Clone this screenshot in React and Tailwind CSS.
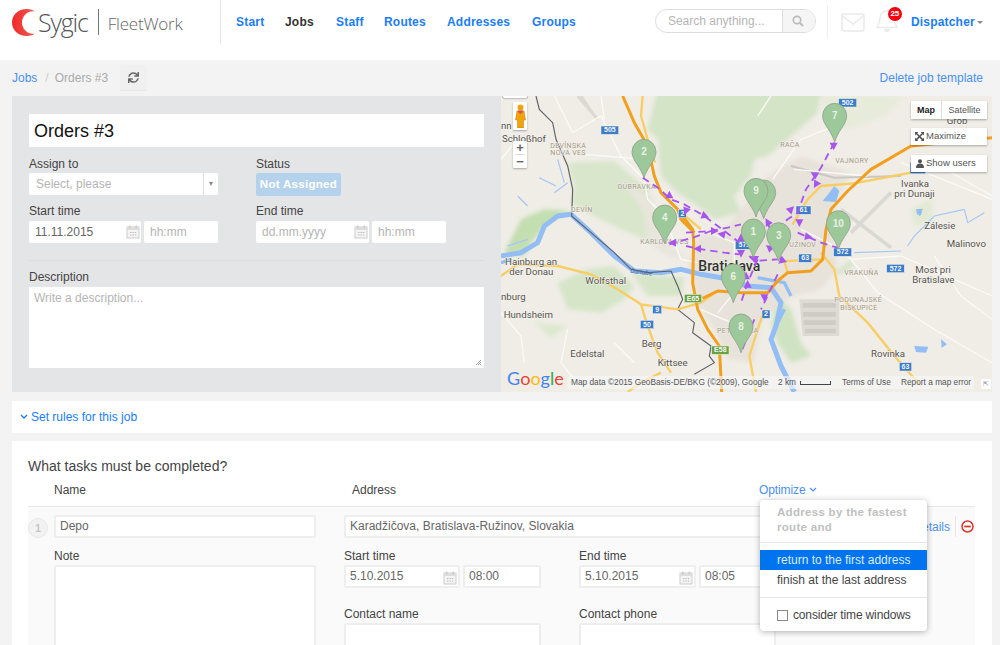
import React from "react";
import { FaSync } from "react-icons/fa";

const F = "[font-family:'Liberation_Sans',Arial,sans-serif]";

function Cal() {
  return (
    <svg width="14" height="14" viewBox="0 0 14 14" className="absolute right-[1px] top-[4px]">
      <rect x="1" y="2" width="12" height="11" fill="#f4f4f4" stroke="#ccc" />
      <rect x="1" y="2" width="12" height="3" fill="#ddd" />
      <rect x="3" y="0.5" width="1.5" height="3" fill="#ccc" />
      <rect x="9.5" y="0.5" width="1.5" height="3" fill="#ccc" />
      <path d="M4 7.5h1.4M6.4 7.5h1.4M8.8 7.5h1.4M4 10h1.4M6.4 10h1.4M8.8 10h1.4" stroke="#bbb" strokeWidth="1.2" />
    </svg>
  );
}

function Field({ className = "", children, muted, date }) {
  return (
    <div className={`relative h-[22px] shrink-0 rounded-[2px] bg-white px-[6px] text-[12px] leading-[22px] ${muted ? "text-[#b4b4b4]" : "text-[#666]"} ${className}`}>
      {children}
      {date && <Cal />}
    </div>
  );
}

function RowField({ className = "", children, date }) {
  return (
    <div className={`relative h-[23px] shrink-0 rounded-[2px] border-2 border-[#eeeeee] bg-white px-[4px] text-[12px] leading-[19px] text-[#666] ${className}`}>
      {children}
      {date && <Cal />}
    </div>
  );
}

function Pin({ x, y, n }) {
  return (
    <g>
      <path d={`M${x - 36} ${y}a36 38 0 1 1 72 0c0 14 -8 26 -16 38c-8 12 -16 26 -20 40c-4 -14 -12 -28 -20 -40c-8 -12 -16 -24 -16 -38z`} fill="#9dc99a" stroke="#8f9f8d" strokeWidth="2.5" />
      <text x={x} y={y + 10} textAnchor="middle" fontSize="30" fontWeight="700" fill="#e9f1e4" fontFamily="Liberation Sans">{n}</text>
    </g>
  );
}

function Shield({ x, y, t, w = 40, c = "#3d7cc9" }) {
  return (
    <g>
      <rect x={x} y={y} width={w} height="25" fill={c} stroke="#f4f4f0" strokeWidth="1.5" />
      <text x={x + w / 2} y={y + 19} textAnchor="middle" fontSize="21" fontWeight="700" fill="#f2f6fb" fontFamily="Liberation Sans">{t}</text>
    </g>
  );
}

function Town({ x, y, t, s = 29 }) {
  return <text x={x} y={y} fontSize={s} fill="#55534e" stroke="#f5f3ee" strokeWidth="3" paintOrder="stroke" fontFamily="Roboto, Liberation Sans">{t}</text>;
}

function Dist({ x, y, t }) {
  return <text x={x} y={y} fontSize="21" letterSpacing="1" fill="#a3998a" stroke="#f3f0e8" strokeWidth="2.5" paintOrder="stroke" fontFamily="Roboto, Liberation Sans">{t}</text>;
}

const route = [
  "M425 245L470 275L510 310L550 325L610 360L690 420L715 440",
  "M555 410L630 405L680 395L720 385",
  "M505 445L575 425L630 405",
  "M555 450L590 458L670 470L715 475",
  "M1000 140L960 215L915 280L890 350L860 370L800 420",
  "M890 410L960 440L1010 455",
  "M770 490L740 560L720 620",
  "M830 535L790 620L780 640",
  "M760 670L720 770",
  "M800 380L840 490",
  "M745 480L760 495L830 490",
];

const arrows = [
  [505, 297, 0], [555, 345, 200], [612, 360, 110], [640, 405, 90], [662, 415, 280], [590, 458, 270],
  [515, 440, 270], [720, 425, 0], [720, 472, 180], [800, 378, 330], [940, 235, 300], [945, 265, 210],
  [998, 150, 180], [870, 340, 45], [895, 380, 180], [922, 422, 100], [790, 605, 180], [740, 565, 0],
  [762, 490, 180], [842, 495, 230], [735, 540, 0], [805, 455, 310],
];

function MapSvg() {
  return (
    <svg viewBox="0 0 1473 888" className="absolute inset-0 h-full w-full" preserveAspectRatio="none">
      <defs>
        <filter id="soft" x="-5%" y="-5%" width="110%" height="110%"><feGaussianBlur stdDeviation="7" /></filter>
      </defs>
      <rect width="1473" height="888" fill="#efede6" />
      {/* pale + forest areas */}
      <g filter="url(#soft)">
        <path d="M960 0H1210L1150 60L1040 100L980 90Z" fill="#e7ebda" />
        <path d="M470 -20H960L950 50L860 130L800 180L760 190L750 240L700 300L720 350L640 370L590 330L530 290L480 240L470 130L440 100Z" fill="#d4e4c7" />
        <path d="M200 200L340 195L440 280L460 340L450 420L430 430L360 400L260 350L210 320L220 270Z" fill="#d9e6cb" />
        <path d="M10 470L60 370L130 340L210 345L140 380L90 440L70 480Z" fill="#c3deb0" />
        <path d="M170 560L260 520L340 510L400 570L370 610L300 650L200 640Z" fill="#d6e5c8" />
        <path d="M390 530L550 545L540 600L440 600Z" fill="#d6e5c8" />
        <path d="M100 680L200 690L150 725Z" fill="#dde8cf" />
        <path d="M830 600L870 640L900 740L930 780L870 800L830 740L810 690Z" fill="#cfe3c2" />
        <path d="M1000 530L1050 490L1060 510L1020 535Z" fill="#d6e5c8" />
        <path d="M1230 340L1290 310L1300 380L1240 390Z" fill="#e2e9d4" />
        <path d="M590 420L660 410L720 340L800 240L900 180L1050 230L1000 330L1000 440L1010 520L960 580L880 600L820 640L780 680L760 800L680 790L640 700L600 640L560 500Z" fill="#e7e3da" />
        <path d="M360 250L440 300L480 420L560 490L500 480L440 440L430 350Z" fill="#e8e5dc" />
      </g>
      <path d="M895 610H1015V720H905Z" fill="#dedbd5" />
      <path d="M905 628H1005M905 655H1005M908 680H1005M912 705H1005" stroke="#cfccc6" strokeWidth="14" fill="none" />
      <path d="M1020 340L1170 455M1050 410L1170 290" stroke="#dad8d2" strokeWidth="11" fill="none" />
      <path d="M230 0L290 70M240 0L280 60" stroke="#dcd9d2" strokeWidth="9" fill="none" />
      {/* rail */}
      <path d="M870 210L1000 245L1200 240" stroke="#c9c7c2" strokeWidth="6" fill="none" />
      {/* minor roads */}
      <path d="M0 190L40 140M215 110L300 60L360 180L430 250L440 310L470 340M250 175L370 185L430 190M300 0L310 70M500 390L540 490L590 500M815 250L900 130L1000 90M1473 300L1300 200L1230 230M880 220L1100 240M600 400L700 440L700 500M900 400L1000 450L1050 490L1130 590M1050 490L1200 480L1473 600M1300 480L1380 600L1473 670M650 650L700 590M600 640L690 680M0 650L60 720L70 800M200 700L180 800L250 888M340 740L400 800M1130 590L1300 700L1473 800M1200 200L1473 310M810 0L770 60M160 0L215 110" stroke="#fbfaf6" strokeWidth="4" fill="none" />
      {/* water */}
      <path d="M0 480L60 470L110 440L130 390L170 360L210 355L270 410L340 480L400 525L480 530L540 520L600 535L660 545L740 570L810 575L840 620L825 690L810 730L840 810L880 888" stroke="#93bdf5" strokeWidth="15" strokeLinejoin="round" fill="none" />
      <path d="M770 545L850 560L870 600M825 690L850 640M0 500L30 490" stroke="#93bdf5" strokeWidth="10" fill="none" />
      <path d="M170 190L190 260M115 245L165 270M160 290L200 260M50 300L80 330M1060 470L1200 465M1220 450L1240 420L1300 360L1390 340M1390 340L1400 380L1450 350M1250 340L1256 360M80 430L20 450" stroke="#a4c6f5" strokeWidth="3.5" fill="none" />
      <path d="M1000 270L1015 285L1005 318L965 315L985 290Z" fill="#93bdf5" />
      <path d="M1240 750L1282 752L1275 770L1245 768Z" fill="#93bdf5" />
      <path d="M1320 730L1338 745L1322 755Z" fill="#93bdf5" />
      <path d="M1245 340L1265 338L1260 358L1248 355Z" fill="#93bdf5" />
      {/* border */}
      <path d="M105 0L115 40L155 80L165 130L200 210L215 280L212 360L270 410L340 470L390 520L440 530L510 525L530 570L545 610L530 640L580 680L575 710L630 750L625 780L640 800L580 835" stroke="#5e6168" strokeWidth="3.5" fill="none" />
      {/* yellow */}
      <path d="M425 0L420 60L440 130L462 200M530 340L600 400M875 385L920 310L960 270L1060 262L1230 230M0 540L50 505L170 510L270 535L350 580L420 625L530 640L600 620L650 585M420 625L440 690L470 770L510 830M960 470L1000 520L1015 600L1100 680L1180 780L1260 870M745 780L765 888M790 640L770 700L745 780M860 530L850 495L965 490M480 830L420 860L380 888" stroke="#f8cd62" strokeWidth="7" fill="none" />
      {/* orange */}
      <path d="M365 0L400 80L440 150L460 240L480 290L530 340L575 400L578 440L575 560L590 640L620 700L655 750L662 888M605 607L650 585L720 590L800 590L830 555L860 530L930 525L965 490L975 400L990 340L1040 285L1110 220L1230 150L1473 125M530 340L540 370L580 410" stroke="#f29f1e" strokeWidth="9" strokeLinejoin="round" fill="none" />
      {/* shields */}
      <rect x="1228" y="200" width="45" height="32" fill="#3d7cc9" />
      <Shield x={300} y={90} t="505" w={53} />
      <Shield x={1013} y={8} t="502" w={54} />
      <Shield x={532} y={340} t="2" w={24} />
      <Shield x={703} y={435} t="572" w={54} />
      <Shield x={885} y={330} t="61" w={45} />
      <Shield x={893} y={474} t="63" w={39} />
      <Shield x={998} y={456} t="572" w={54} />
      <Shield x={1157} y={505} t="572" w={53} />
      <Shield x={455} y={628} t="9" w={27} />
      <Shield x={418} y={673} t="50" w={40} />
      <Shield x={783} y={642} t="2" w={24} />
      <Shield x={1195} y={800} t="63" w={37} />
      <Shield x={550} y={595} t="E65" w={52} c="#6aa33f" />
      <Shield x={632} y={750} t="E58" w={52} c="#6aa33f" />
      {/* labels */}
      <Town x={0} y={100} t="nn" />
      <Town x={3} y={138} t="Schloßhof" />
      <Dist x={148} y={155} t="DEVÍNSKA" />
      <Dist x={148} y={178} t="NOVÁ VES" />
      <Dist x={350} y={279} t="DÚBRAVKA" />
      <Dist x={210} y={347} t="DEVÍN" />
      <Dist x={418} y={443} t="KARLOVA VES" />
      <Dist x={838} y={153} t="RAČA" />
      <Dist x={1003} y={201} t="VAJNORY" />
      <Dist x={865} y={453} t="UŽINOV" />
      <Dist x={1030} y={536} t="VRAKUŇA" />
      <Dist x={1000} y={618} t="PODUNAJSKÉ" />
      <Dist x={1018} y={641} t="BISKUPICE" />
      <Dist x={648} y={710} t="PETRŽALKA" />
      <Town x={1337} y={84} t="Grob" />
      <Town x={1200} y={272} t="Ivanka" />
      <Town x={1180} y={302} t="pri Dunaji" />
      <Town x={1270} y={400} t="Zálesie" />
      <Town x={1337} y={452} t="Malinovo" />
      <Town x={1243} y={530} t="Most pri" />
      <Town x={1234} y={560} t="Bratislave" />
      <Town x={1110} y={782} t="Rovinka" />
      <Town x={12} y={507} t="Hainburg an" />
      <Town x={25} y={537} t="der Donau" />
      <Town x={253} y={563} t="Wolfsthal" />
      <Town x={0} y={611} t="nburg" />
      <Town x={8} y={666} t="Hundsheim" />
      <Town x={422} y={752} t="Berg" />
      <Town x={208} y={782} t="Edelstal" />
      <Town x={470} y={810} t="Kittsee" />
      <text x={592} y={524} fontSize="42" fontWeight="500" fill="#333" stroke="#f0eee7" strokeWidth="3" paintOrder="stroke" fontFamily="Roboto, Liberation Sans">Bratislava</text>
      <text x={388} y={530} fontSize="20" fontStyle="italic" fill="#44689e" transform="rotate(8 388 530)" fontFamily="Roboto, Liberation Sans">Danube</text>
      {/* route */}
      {route.map((d, i) => <path key={i} d={d} stroke="#a855f0" strokeWidth="5.5" strokeDasharray="22 15" fill="none" />)}
      {arrows.map(([x, y, r], i) => <path key={i} d={`M${x} ${y - 13}L${x + 12} ${y + 10}L${x - 12} ${y + 10}Z`} transform={`rotate(${r} ${x} ${y})`} fill="#a855f0" />)}
      {/* pins */}
      <Pin x={429} y={168} n="2" />
      <Pin x={1001} y={60} n="7" />
      <Pin x={788} y={290} n="5" />
      <Pin x={765} y={285} n="9" />
      <Pin x={491} y={365} n="4" />
      <Pin x={1012} y={382} n="10" />
      <Pin x={833} y={418} n="3" />
      <Pin x={757} y={407} n="1" />
      <Pin x={697} y={542} n="6" />
      <Pin x={720} y={692} n="8" />
      <rect x="5" y="-10" width="75" height="18" rx="6" fill="#fff" stroke="#999" strokeWidth="2" />
    </svg>
  );
}

function GoogleMapControls() {
  return (
    <>
      <div className="absolute left-[12px] top-[6px] flex h-[28px] w-[14px] items-center justify-center rounded-[1px] bg-white shadow-[0_1px_2px_rgba(0,0,0,0.3)]">
        <svg width="11" height="24" viewBox="0 0 11 24">
          <circle cx="5.500" cy="3.500" r="3" fill="#f0a30a" />
          <path d="M2 7h7l1.500 9H8.500v8h-6v-8H.5z" fill="#f0a30a" stroke="#c07a00" strokeWidth="0.5" />
          <path d="M3 6.500h5v1.500L5.500 10 3 8z" fill="#d9534f" />
        </svg>
      </div>
      <div className="absolute left-[12px] top-[45px] flex h-[27px] w-[14px] flex-col items-center rounded-[1px] bg-white text-[13px] font-bold leading-[13px] text-[#666] shadow-[0_1px_2px_rgba(0,0,0,0.3)]">
        <span className="h-[13px]">+</span>
        <span className="h-px w-[10px] bg-[#ddd]" />
        <span className="h-[13px]">−</span>
      </div>
      <div className="absolute right-[5px] top-[5px] flex h-[18px] w-[76px] bg-white text-[9px] leading-[18px] shadow-[0_1px_2px_rgba(0,0,0,0.3)]">
        <span className="w-[31px] border-r border-[#ddd] text-center font-bold text-[#222]">Map</span>
        <span className="flex-1 text-center text-[#555]">Satellite</span>
      </div>
      <div className="absolute right-[5px] top-[32px] flex h-[17px] w-[76px] items-center gap-[2px] bg-white pl-[4px] text-[9.500px] text-[#555] shadow-[0_1px_2px_rgba(0,0,0,0.3)]">
        <svg width="9" height="9" viewBox="0 0 8 8"><path d="M0 0h3L2 1l2 2 2-2-1-1h3v3L7 2 5 4l2 2 1-1v3H5l1-1-2-2-2 2 1 1H0V5l1 1 2-2-2-2-1 1z" fill="#555" /></svg>
        Maximize
      </div>
      <div className="absolute right-[5px] top-[59px] flex h-[17px] w-[76px] items-center gap-[2px] bg-white pl-[5px] text-[9.500px] text-[#555] shadow-[0_1px_2px_rgba(0,0,0,0.3)]">
        <svg width="8" height="9" viewBox="0 0 8 9"><circle cx="4" cy="2.200" r="2" fill="#555" /><path d="M0 9c0-3 1-4.500 4-4.500S8 6 8 9z" fill="#555" /></svg>
        Show users
      </div>
      <div className="absolute bottom-[4px] left-[6px] flex text-[18px] leading-[20px] [font-family:Lato,sans-serif]">
        <span className="text-[#4285f4]">G</span><span className="text-[#ea4335]">o</span><span className="text-[#fbbc05]">o</span><span className="text-[#4285f4]">g</span><span className="text-[#34a853]">l</span><span className="text-[#ea4335]">e</span>
      </div>
      <div className="absolute bottom-[3px] left-[66px] flex h-[13px] items-center bg-[rgba(245,245,245,0.7)] pl-[4px] text-[8.300px] leading-[13px] text-[#555]">
        <span className="w-[207px]">Map data ©2015 GeoBasis-DE/BKG (©2009), Google</span>
        <span className="w-[22px]">2 km</span>
        <span className="mr-[11px] h-[4px] w-[31px] border-x border-b border-[#444]" />
        <span className="w-[59px]">Terms of Use</span>
        <span className="w-[73px]">Report a map error</span>
      </div>
      <div className="absolute bottom-[3px] right-[1px] h-[10px] w-[10px] bg-white text-center text-[7px] leading-[10px] text-[#888]">⇱</div>
    </>
  );
}

export default function App() {
  return (
    <div className={`h-[645px] w-[1000px] overflow-hidden bg-[#f3f3f3] ${F} text-[12px] text-[#444]`}>
      {/* Header */}
      <header className="flex h-[60px] bg-white">
        <div className="flex h-[44px] w-[221px] items-center border-r border-[#e6e6e6] pl-[12px]">
          <svg width="23" height="27" viewBox="0 0 23 27" className="shrink-0">
            <defs><linearGradient id="lg" x1="0" y1="0" x2="1" y2="0"><stop offset="0" stopColor="#ee2a2a" /><stop offset="1" stopColor="#f25a50" /></linearGradient></defs>
            <path d="M15 0C6 0 0 6 0 13.500S6 27 15 27c3.500 0 6-1 8-2.500C17 26 10 21 10 13.500S17 1 23 2.500C21 1 18.500 0 15 0Z" fill="url(#lg)" />
          </svg>
          <span className="ml-[3px] text-[25px] font-light leading-none tracking-[-1.200px] text-[#555] [font-family:'Open_Sans',sans-serif]">Sygic</span>
          <span className="ml-[10px] h-[26px] w-px bg-[#777]" />
          <span className="ml-[9px] mt-[2px] text-[17px] font-light leading-none tracking-[-0.2px] text-[#666] [font-family:'Open_Sans',sans-serif]">FleetWork</span>
        </div>
        <nav className="flex h-[44px] items-center pl-[15px] text-[12px] font-bold tracking-[0.2px] text-[#1a7dfa]">
          <span className="w-[49px]">Start</span>
          <span className="w-[51px] text-[#333]">Jobs</span>
          <span className="w-[48px]">Staff</span>
          <span className="w-[63px]">Routes</span>
          <span className="w-[85px]">Addresses</span>
          <span>Groups</span>
        </nav>
        <div className="ml-[79px] mt-[9px] flex h-[24px] w-[161px] overflow-hidden rounded-full border border-[#ddd] bg-white">
          <span className="flex-1 pl-[12px] text-[12px] leading-[22px] text-[#b5b5b5]">Search anything...</span>
          <span className="flex w-[33px] items-center justify-center border-l border-[#ddd] bg-[#f5f5f5] pr-[2px]">
            <svg width="12" height="12" viewBox="0 0 12 12"><circle cx="5" cy="5" r="3.700" fill="none" stroke="#bbb" strokeWidth="1.700" /><path d="M8 8l3 3" stroke="#bbb" strokeWidth="2" /></svg>
          </span>
        </div>
        <span className="ml-[11px] mt-[5px] h-[33px] w-px self-start bg-[#eeeeee]" />
        <svg width="24" height="19" viewBox="0 0 24 19" className="ml-[13px] mt-[13px] shrink-0">
          <rect x="1" y="1" width="22" height="17" rx="2" fill="none" stroke="#eaeaea" strokeWidth="1.500" />
          <path d="M1.500 3L12 11L22.500 3" fill="none" stroke="#eaeaea" strokeWidth="1.500" />
        </svg>
        <div className="relative ml-[11px] mt-[10px] h-[24px] w-[22px] shrink-0">
          <svg width="22" height="24" viewBox="0 0 22 24">
            <path d="M11 1c-4.500 0-7 3-7 7 0 6-3 8-3 9.500h20c0-1.500-3-3.500-3-9.500 0-4-2.500-7-7-7z" fill="none" stroke="#eaeaea" strokeWidth="1.500" />
            <path d="M8 19a3 3 0 0 0 6 0z" fill="#eaeaea" />
          </svg>
          <span className="absolute left-[12px] top-[-3px] flex h-[14px] w-[14px] items-center justify-center rounded-full bg-[#f5010f] text-[8px] font-bold text-white">25</span>
        </div>
        <span className="ml-[13px] mt-[15px] text-[12px] font-bold leading-[14px] tracking-[0.2px] text-[#1a7dfa]">Dispatcher</span>
        <span className="ml-[2px] mt-[21px] h-0 w-0 border-x-[3px] border-t-[3px] border-x-transparent border-t-[#888]" />
      </header>

      {/* Breadcrumb */}
      <div className="flex h-[36px] w-[983px] items-center pl-[12px] text-[12px]">
        <span className="text-[#4a90f0]">Jobs</span>
        <span className="ml-[8px] text-[#ccc]">/</span>
        <span className="ml-[6px] text-[#aaa]">Orders #3</span>
        <span className="ml-[12px] mt-[-1px] flex h-[25px] w-[27px] items-center justify-center rounded-[2px] bg-[#f0f0f0] shadow-[0_1px_1px_rgba(0,0,0,0.05)]">
          <FaSync size={11} color="#666" />
        </span>
        <span className="ml-auto text-[#4a90f0]">Delete job template</span>
      </div>

      {/* Job panel */}
      <section className="ml-[12px] flex h-[296px] w-[980px] bg-[#e4e5e6]">
        <div className="w-[489px] shrink-0 pl-[17px] pr-[17px] pt-[18px]">
          <div className="flex h-[33px] items-center rounded-[1px] bg-white pl-[5px] text-[18px] leading-none text-[#111]">Orders #3</div>
          <div className="mt-[10px] flex">
            <div className="w-[227px]">
              <div className="h-[16px] leading-[14px]">Assign to</div>
              <div className="flex h-[22px] w-[189px] rounded-[2px] bg-white text-[#b4b4b4]">
                <span className="flex-1 pl-[7px] leading-[22px]">Select, please</span>
                <span className="flex w-[15px] items-center justify-center border-l border-[#ddd]">
                  <span className="h-0 w-0 border-x-[2.500px] border-t-[4px] border-x-transparent border-t-[#888]" />
                </span>
              </div>
            </div>
            <div>
              <div className="h-[16px] leading-[14px]">Status</div>
              <div className="h-[23px] w-[85px] rounded-[2px] bg-[#b5d2ed] text-center text-[11.500px] font-bold leading-[23px] tracking-[0.3px] text-white">Not Assigned</div>
            </div>
          </div>
          <div className="mt-[8px] flex">
            <div className="w-[227px]">
              <div className="h-[17px] leading-[14px]">Start time</div>
              <div className="flex gap-[3px]">
                <Field className="w-[112px]" date>11.11.2015</Field>
                <Field className="w-[74px] px-[5px]" muted>hh:mm</Field>
              </div>
            </div>
            <div>
              <div className="h-[17px] leading-[14px]">End time</div>
              <div className="flex gap-[3px]">
                <Field className="w-[113px]" muted date>dd.mm.yyyy</Field>
                <Field className="w-[74px] px-[5px]" muted>hh:mm</Field>
              </div>
            </div>
          </div>
          <div className="mt-[17px] h-px bg-[#dcdddf]" />
          <div className="mt-[9px] h-[17px] leading-[14px]">Description</div>
          <div className="relative h-[81px] rounded-[1px] bg-white px-[5px] pt-[2px] text-[#b4b4b4]">
            Write a description...
            <svg width="7" height="7" viewBox="0 0 7 7" className="absolute bottom-[2px] right-[2px]"><path d="M6 1L1 6M6 3L3 6M6 5L5 6" stroke="#888" strokeWidth="0.800" /></svg>
          </div>
        </div>
        <div className="relative w-[491px] overflow-hidden">
          <MapSvg />
          <GoogleMapControls />
        </div>
      </section>

      {/* Rules */}
      <div className="ml-[12px] mt-[9px] flex h-[32px] w-[980px] items-center bg-white pl-[8px] text-[#1a7dfa]">
        <svg width="8" height="6" viewBox="0 0 8 6"><path d="M1 1l3 3 3-3" fill="none" stroke="#1a7dfa" strokeWidth="1.300" /></svg>
        <span className="ml-[3px]">Set rules for this job</span>
      </div>

      {/* Tasks */}
      <section className="relative ml-[12px] mt-[8px] h-[210px] w-[980px] overflow-hidden bg-white pl-[16px] pr-[17px] pt-[17px]">
        <h2 className="h-[16px] text-[14px] leading-[16px] text-[#444]">What tasks must be completed?</h2>
        <div className="flex h-[33px] items-center border-b border-[#e9e9e9]">
          <span className="ml-[26px] w-[298px]">Name</span>
          <span className="w-[407px]">Address</span>
          <span className="flex items-center tracking-[-0.1px] text-[#4a90f0]">
            Optimize
            <svg width="8" height="6" viewBox="0 0 8 6" className="ml-[3px]"><path d="M1 1l3 3 3-3" fill="none" stroke="#4a90f0" strokeWidth="1.200" /></svg>
          </span>
        </div>
        <div className="flex h-[200px] bg-[#fafafa] pt-[8px]">
          <span className="mt-[3px] flex h-[20px] w-[20px] shrink-0 items-center justify-center rounded-full border border-[#e8e8e8] bg-[#f2f2f2] text-[10px] font-bold text-[#c4c4c4]">1</span>
          <div className="ml-[6px] w-[262px] shrink-0">
            <RowField className="w-full">Depo</RowField>
            <div className="mt-[10px] h-[17px] leading-[16px]">Note</div>
            <div className="h-[100px] rounded-[2px] border-2 border-[#eeeeee] bg-white" />
          </div>
          <div className="ml-[28px] w-[433px] shrink-0">
            <RowField className="w-[433px]">Karadžičova, Bratislava-Ružinov, Slovakia</RowField>
            <div className="mt-[10px] flex">
              <div className="w-[236px]">
                <div className="h-[17px] leading-[16px]">Start time</div>
                <div className="flex gap-[3px]">
                  <RowField className="w-[116px]" date>5.10.2015</RowField>
                  <RowField className="w-[78px]">08:00</RowField>
                </div>
                <div className="mt-[19px] h-[16px] leading-[14px]">Contact name</div>
                <RowField className="h-[40px] w-[197px]" />
              </div>
              <div>
                <div className="h-[17px] leading-[16px]">End time</div>
                <div className="flex gap-[3px]">
                  <RowField className="w-[117px]" date>5.10.2015</RowField>
                  <RowField className="w-[78px]">08:05</RowField>
                </div>
                <div className="mt-[19px] h-[16px] leading-[14px]">Contact phone</div>
                <RowField className="h-[40px] w-[197px]" />
              </div>
            </div>
          </div>
          <div className="mt-[2px] flex h-[20px] flex-1 items-start justify-end">
            <span className="pr-[5px] pt-[3px] leading-[14px] text-[#4a90f0]">Details</span>
            <span className="mt-[-1px] flex h-[21px] items-center border-l border-[#e8e8e8] pl-[5px] pr-[1px]">
              <svg width="13" height="13" viewBox="0 0 13 13"><circle cx="6.500" cy="6.500" r="5.500" fill="#fff" stroke="#d9382e" strokeWidth="1.500" /><path d="M3.200 6.500h6.600" stroke="#d9382e" strokeWidth="1.800" /></svg>
            </span>
          </div>
        </div>

        {/* Optimize menu */}
        <div className="absolute left-[748px] top-[59px] h-[131px] w-[167px] rounded-[4px] bg-white text-[12px] shadow-[0_1px_6px_rgba(0,0,0,0.3)]">
          <div className="pl-[17px] pr-[4px] pt-[5px] text-[11.500px] font-bold leading-[15px] tracking-[0.3px] text-[#c0c0c0]">Address by the fastest route and</div>
          <div className="mt-[7px] h-px bg-[#e6e6e6]" />
          <div className="mt-[7px] h-[20px] bg-[#0073ee] pl-[17px] leading-[20px] text-[#dcecff]">return to the first address</div>
          <div className="h-[20px] pl-[17px] leading-[20px] text-[#444]">finish at the last address</div>
          <div className="mt-[7px] h-px bg-[#e6e6e6]" />
          <div className="mt-[9px] flex items-center pl-[17px]">
            <span className="h-[11px] w-[11px] border border-[#888] bg-white" />
            <span className="ml-[5px] leading-[16px] tracking-[-0.15px]">consider time windows</span>
          </div>
        </div>
      </section>
    </div>
  );
}
